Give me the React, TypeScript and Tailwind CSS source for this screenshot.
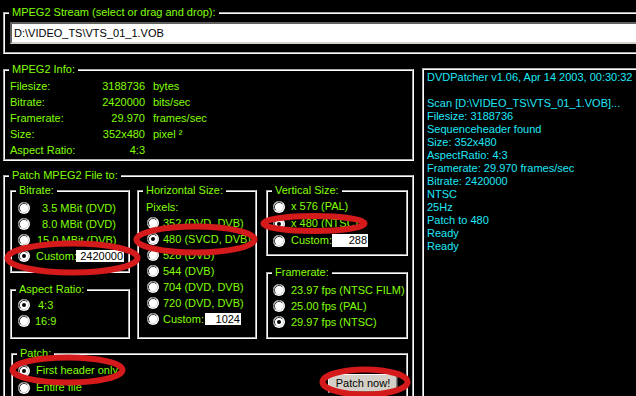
import React from 'react';

const green = 'text-[#80ff00]';

interface GroupProps {
  title: string;
  className?: string;
  children?: React.ReactNode;
}

const Group: React.FC<GroupProps> = ({ title, className = '', children }) => (
  <fieldset className={`min-w-0 border-2 border-white [border-style:groove] ${className}`}>
    <legend className={`ml-[4px] px-[3px] leading-[13px] ${green}`}>{title}</legend>
    {children}
  </fieldset>
);

const RadioDot: React.FC<{ checked?: boolean }> = ({ checked }) => (
  <svg width="12" height="12" viewBox="0 0 12 12" className="shrink-0">
    <circle cx="6" cy="6" r="6" fill="#ffffff" />
    <path d="M2.11 9.89 A5.5 5.5 0 0 1 9.89 2.11" fill="none" stroke="#808080" strokeWidth="1" />
    <path d="M2.82 9.18 A4.5 4.5 0 0 1 9.18 2.82" fill="none" stroke="#404040" strokeWidth="1" />
    <path d="M2.82 9.18 A4.5 4.5 0 0 0 9.18 2.82" fill="none" stroke="#d4d0c8" strokeWidth="1" />
    {checked && <circle cx="6" cy="6" r="2" fill="#000000" />}
  </svg>
);

interface RadioProps {
  label: string;
  checked?: boolean;
  gap?: string;
  row?: string;
  labelClass?: string;
  children?: React.ReactNode;
}

const Radio: React.FC<RadioProps> = ({ label, checked, gap = 'ml-[6px]', row = 'h-[16px]', labelClass = '', children }) => (
  <div className={`flex items-center ${row}`}>
    <RadioDot checked={checked} />
    <span className={`${gap} ${labelClass} shrink-0 whitespace-pre ${green}`}>{label}</span>
    {children}
  </div>
);

const NumBox: React.FC<{ value: string; className: string }> = ({ value, className }) => (
  <div className={`shrink-0 bg-white pr-[1px] text-right text-black ${className}`}>{value}</div>
);

const infoRows = [
  ['Filesize:', '3188736', 'bytes'],
  ['Bitrate:', '2420000', 'bits/sec'],
  ['Framerate:', '29.970', 'frames/sec'],
  ['Size:', '352x480', 'pixel ²'],
  ['Aspect Ratio:', '4:3', ''],
];

const logLines = [
  'DVDPatcher v1.06, Apr 14 2003, 00:30:32',
  '',
  'Scan [D:\\VIDEO_TS\\VTS_01_1.VOB]...',
  'Filesize: 3188736',
  'Sequenceheader found',
  'Size: 352x480',
  'AspectRatio: 4:3',
  'Framerate: 29.970 frames/sec',
  'Bitrate: 2420000',
  'NTSC',
  '25Hz',
  'Patch to 480',
  'Ready',
  'Ready',
];

export default function App() {
  return (
    <div className="relative h-[396px] w-[636px] overflow-hidden bg-black pl-[3px] pt-[6px] font-['Liberation_Sans',Arial,sans-serif] text-[11px]">
      <Group title="MPEG2 Stream (select or drag and drop):" className="h-[48px] w-[660px]">
        <div className="pl-[5px] pt-[3px]">
          <div className="h-[22px] w-[660px] border-2 border-t-[#606060] border-l-[#606060] border-b-[#d4d0c8] border-r-[#d4d0c8] bg-white pl-[2px] leading-[18px] text-black">
            D:\VIDEO_TS\VTS_01_1.VOB
          </div>
        </div>
      </Group>

      <div className="flex items-start">
        <div className="w-[411px] shrink-0">
          <Group title="MPEG2 Info:" className="mt-[9px] h-[98px]">
            <div className={`pl-[5px] pt-[2px] ${green}`}>
              {infoRows.map(([k, v, u]) => (
                <div key={k} className="flex h-[16px] items-center">
                  <span className="w-[80px]">{k}</span>
                  <span className="w-[55px] text-right">{v}</span>
                  <span className="ml-[8px]">{u}</span>
                </div>
              ))}
            </div>
          </Group>

          <Group title="Patch MPEG2 File to:" className="mt-[8px] h-[240px]">
            <div className="flex pl-[5px] pt-[2px]">
              <div className="w-[120px] shrink-0">
                <Group title="Bitrate:" className="h-[89px]">
                  <div className="pl-[6px] pt-[3px]">
                    <Radio label="3.5 MBit (DVD)" gap="ml-[12px]" />
                    <Radio label="8.0 MBit (DVD)" gap="ml-[12px]" />
                    <Radio label="15.0 MBit (DVB)" gap="ml-[7px]" />
                    <Radio label="Custom:" checked labelClass="w-[40px]">
                      <NumBox value="2420000" className="h-[12px] w-[48px] leading-[12px]" />
                    </Radio>
                  </div>
                </Group>
                <Group title="Aspect Ratio:" className="mt-[10px] h-[56px]">
                  <div className="pl-[6px] pt-[1px]">
                    <Radio label="4:3" checked gap="ml-[8px]" />
                    <Radio label="16:9" gap="ml-[5px]" />
                  </div>
                </Group>
              </div>

              <Group title="Horizontal Size:" className="ml-[7px] h-[155px] w-[120px] shrink-0">
                <div className="pl-[8px] pt-[2px]">
                  <div className={`-ml-[1px] flex h-[16px] items-center ${green}`}>Pixels:</div>
                  <Radio label="352 (DVD, DVB)" gap="ml-[4px]" />
                  <Radio label="480 (SVCD, DVB)" checked gap="ml-[4px]" />
                  <Radio label="528 (DVB)" gap="ml-[4px]" />
                  <Radio label="544 (DVB)" gap="ml-[4px]" />
                  <Radio label="704 (DVD, DVB)" gap="ml-[4px]" />
                  <Radio label="720 (DVD, DVB)" gap="ml-[4px]" />
                  <Radio label="Custom:" gap="ml-[4px]" labelClass="w-[42px]">
                    <NumBox value="1024" className="h-[12px] w-[36px] leading-[12px]" />
                  </Radio>
                </div>
              </Group>

              <div className="ml-[9px] w-[142px] shrink-0">
                <Group title="Vertical Size:" className="h-[72px]">
                  <div className="pl-[5px] pt-[1px]">
                    <Radio label="x 576 (PAL)" row="h-[17px]" />
                    <Radio label="x 480 (NTSC)" checked row="h-[17px]" />
                    <Radio label="Custom:" row="h-[17px]" labelClass="w-[41px]">
                      <NumBox value="288" className="h-[13px] w-[36px] leading-[13px]" />
                    </Radio>
                  </div>
                </Group>
                <Group title="Framerate:" className="mt-[10px] h-[73px]">
                  <div className="pl-[5px] pt-[3px]">
                    <Radio label="23.97 fps (NTSC FILM)" />
                    <Radio label="25.00 fps (PAL)" />
                    <Radio label="29.97 fps (NTSC)" checked />
                  </div>
                </Group>
              </div>
            </div>

            <Group title="Patch:" className="ml-[6px] mt-[8px] h-[60px] w-[397px]">
              <div className="flex items-start justify-between pl-[5px] pt-[2px]">
                <div>
                  <Radio label="First header only" checked row="h-[17px]" />
                  <Radio label="Entire file" row="h-[17px]" />
                </div>
                <div className="mr-[8px] mt-[12px] flex h-[19px] w-[70px] items-center justify-center border border-t-white border-l-white border-b-[#404040] border-r-[#404040] bg-[#d4d0c8] text-black shadow-[inset_-1px_-1px_0_#808080]">
                  Patch now!
                </div>
              </div>
            </Group>
          </Group>
        </div>

        <div className="ml-[8px] mt-[14px] h-[340px] w-[230px] shrink-0 border-2 border-white bg-black pl-[3px] pt-[1px] leading-[13px] text-[#1ee8f8] [border-style:groove]">
          {logLines.map((l, i) => (
            <div key={i} className="h-[13px] whitespace-pre">{l}</div>
          ))}
        </div>
      </div>

      <svg className="pointer-events-none absolute left-0 top-0" width="636" height="396" viewBox="0 0 636 396">
        <g fill="none" stroke="#d41a1a" strokeWidth="6">
          <ellipse cx="72.5" cy="258" rx="65" ry="14.5" />
          <ellipse cx="195.5" cy="239.5" rx="59" ry="13" />
          <ellipse cx="314" cy="223.5" rx="50.5" ry="7.5" />
          <ellipse cx="67.5" cy="370" rx="55" ry="12.5" />
          <ellipse cx="365" cy="382" rx="42.5" ry="12.5" />
        </g>
      </svg>
    </div>
  );
}
